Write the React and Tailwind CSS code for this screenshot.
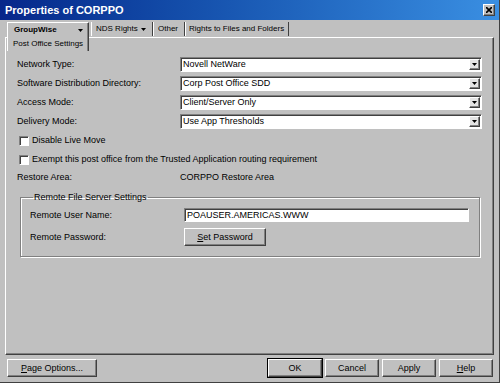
import React from 'react';

const raised =
  'border border-t-white border-l-white border-r-[#404040] border-b-[#404040] shadow-[inset_-1px_-1px_0_#808080]';
const sunken =
  'border border-t-[#808080] border-l-[#808080] border-r-white border-b-white shadow-[inset_1px_1px_0_#404040]';

const Arrow = ({ w = 7, h = 4 }) => (
  <svg width={w} height={h} viewBox="0 0 7 4">
    <path d="M0 0h7L3.5 4z" fill="black" />
  </svg>
);

const Combo = ({ value }) => (
  <div className={`flex h-[15px] w-[302px] items-center bg-white ${sunken}`}>
    <span className="flex-1 truncate pl-[2px] leading-[13px]">{value}</span>
    <div className={`mr-[1px] flex h-[11px] w-[11px] items-center justify-center bg-[#e4e4e4] ${raised}`}>
      <Arrow w={5} h={3} />
    </div>
  </div>
);

const Btn = ({ children, className = '', isDefault }) => (
  <div
    className={`flex h-[18px] items-center justify-center bg-[#c0c0c0] leading-[11px] ${raised} ${
      isDefault ? 'outline outline-black' : ''
    } ${className}`}
  >
    {children}
  </div>
);

const Checkbox = ({ label }) => (
  <div className="flex h-[19px] items-center">
    <div className={`ml-[2px] h-[10px] w-[10px] bg-white ${sunken}`} />
    <span className="ml-[3px] leading-[11px]">{label}</span>
  </div>
);

const rows = [
  ['Network Type:', 'Novell NetWare'],
  ['Software Distribution Directory:', 'Corp Post Office SDD'],
  ['Access Mode:', 'Client/Server Only'],
  ['Delivery Mode:', 'Use App Thresholds'],
];

export default function App() {
  return (
    <div className="flex h-[383px] w-[500px] flex-col overflow-hidden border-r border-b border-r-[#404040] border-b-[#404040] bg-[#c0c0c0] font-['Liberation_Sans',Arial,sans-serif] text-[9px] text-black">
      {/* Title bar */}
      <div className="flex h-[20px] shrink-0 items-center justify-between bg-linear-to-r from-[#08268a] to-[#3a8fe2] pl-[5px] pr-[4px]">
        <span className="text-[11px] font-bold leading-[13px] text-white">Properties of CORPPO</span>
        <div className={`flex h-[12px] w-[12px] items-center justify-center bg-[#c0c0c0] ${raised}`}>
          <svg width="6" height="6" viewBox="0 0 6 6">
            <path d="M0 0L6 6M6 0L0 6" stroke="black" strokeWidth="1.6" />
          </svg>
        </div>
      </div>

      {/* Tabs */}
      <div className="flex h-[17px] shrink-0 items-start pl-[7px] pt-[2px] text-[8px] leading-[10px]">
        <div className="relative z-10 h-[29px] w-[82px] border-t border-r border-l border-t-white border-r-[#404040] border-l-white bg-[#c0c0c0] shadow-[inset_-1px_0_0_#808080]">
          <div className="flex h-[14px] items-center pl-[6px] pr-[5px]">
            <span className="flex-1 font-bold">GroupWise</span>
            <Arrow w={5} h={3} />
          </div>
          <div className="flex h-[13px] items-center pl-[5px]">Post Office Settings</div>
        </div>
        <div className="ml-[2px] flex h-[14px] w-[62px] items-center border-r border-l border-r-[#404040] border-l-white pl-[4px] pr-[6px]">
          <span className="flex-1">NDS Rights</span>
          <Arrow w={5} h={3} />
        </div>
        <div className="flex h-[14px] w-[32px] items-center border-r border-l border-r-[#404040] border-l-white pl-[4px]">
          Other
        </div>
        <div className="flex h-[14px] w-[104px] items-center border-r border-l border-r-[#404040] border-l-white pl-[3px]">
          Rights to Files and Folders
        </div>
      </div>

      {/* Panel */}
      <div className={`ml-[5px] h-[318px] w-[489px] shrink-0 bg-[#c0c0c0] pl-[11px] pt-[17px] ${raised}`}>
        {rows.map(([label, value]) => (
          <div key={label} className="flex h-[19px] items-center">
            <span className="w-[163px] leading-[11px]">{label}</span>
            <Combo value={value} />
          </div>
        ))}
        <Checkbox label="Disable Live Move" />
        <Checkbox label="Exempt this post office from the Trusted Application routing requirement" />
        <div className="flex h-[17px] items-center leading-[11px]">
          <span className="w-[163px]">Restore Area:</span>
          <span>CORPPO Restore Area</span>
        </div>

        <fieldset className="mt-[6px] mr-[2px] ml-[3px] w-[460px] border border-[#808080] pb-[10px] pl-[9px] pr-[10px] shadow-[1px_1px_0_white,inset_1px_1px_0_white]">
          <legend className="ml-[3px] px-[1px] leading-[11px]">Remote File Server Settings</legend>
          <div className="mt-[5px] flex h-[14px] items-center">
            <span className="w-[154px] leading-[11px]">Remote User Name:</span>
            <div className={`flex h-[14px] flex-1 items-center bg-white pl-[2px] leading-[11px] ${sunken}`}>
              POAUSER.AMERICAS.WWW
            </div>
          </div>
          <div className="mt-[6px] flex h-[18px] items-center">
            <span className="w-[154px] leading-[11px]">Remote Password:</span>
            <Btn className="w-[82px]">
              <span>
                <span className="underline">S</span>et Password
              </span>
            </Btn>
          </div>
        </fieldset>
      </div>

      {/* Bottom buttons */}
      <div className="mt-[4px] flex items-center pl-[7px] pr-[6px]">
        <Btn className="w-[90px]">
          <span>
            <span className="underline">P</span>age Options...
          </span>
        </Btn>
        <div className="ml-auto flex gap-[3px]">
          <Btn className="w-[54px]" isDefault>
            OK
          </Btn>
          <Btn className="w-[54px]">Cancel</Btn>
          <Btn className="w-[54px]">Apply</Btn>
          <Btn className="w-[54px]">
            <span>
              <span className="underline">H</span>elp
            </span>
          </Btn>
        </div>
      </div>
    </div>
  );
}
